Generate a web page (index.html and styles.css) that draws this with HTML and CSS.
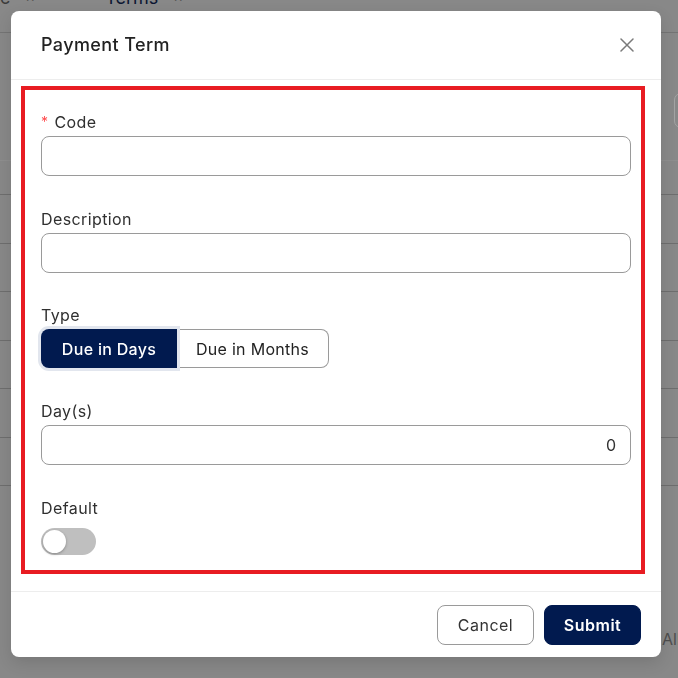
FILE: index.html
```html
<!DOCTYPE html>
<html lang="en">
<head>
<meta charset="utf-8">
<title>Payment Term</title>
<link rel="stylesheet" href="styles.css">
</head>
<body>
<div class="page">
  <div class="tabs">
    <span class="tab tab-cut">c<span class="tab-x">×</span></span>
    <span class="tab tab-terms">Terms<span class="tab-x">×</span></span>
  </div>
  <div class="toolbar"><span class="tool-btn"></span></div>
  <div class="table">
    <div class="thead"></div>
    <div class="row"></div>
    <div class="row"></div>
    <div class="row"></div>
    <div class="row"></div>
    <div class="row"></div>
    <div class="row"></div>
  </div>
  <div class="page-foot">All</div>
</div>

<div class="overlay">
  <div class="modal">
    <div class="modal-header">
      <h1 class="modal-title">Payment Term</h1>
      <button class="close-btn" aria-label="Close">
        <svg width="14" height="14" viewBox="0 0 14 14"><path d="M1 1 L13 13 M13 1 L1 13" stroke="#7a7a7a" stroke-width="1.5" fill="none" stroke-linecap="round"/></svg>
      </button>
    </div>
    <div class="modal-body">
      <div class="field">
        <label class="label"><span class="req">*</span>Code</label>
        <div class="input"></div>
      </div>
      <div class="field">
        <label class="label">Description</label>
        <div class="input"></div>
      </div>
      <div class="field field-type">
        <label class="label">Type</label>
        <div class="seg">
          <span class="seg-btn seg-active">Due in Days</span>
          <span class="seg-btn seg-idle">Due in Months</span>
        </div>
      </div>
      <div class="field">
        <label class="label">Day(s)</label>
        <div class="input input-num">0</div>
      </div>
      <div class="field field-last">
        <label class="label">Default</label>
        <span class="switch"><span class="knob"></span></span>
      </div>
    </div>
    <div class="modal-footer">
      <button class="btn btn-cancel">Cancel</button>
      <button class="btn btn-submit">Submit</button>
    </div>
  </div>
</div>
</body>
</html>
```

FILE: styles.css
```css
html, body {
  margin: 0;
  padding: 0;
}
body {
  width: 678px;
  height: 678px;
  overflow: hidden;
  background: #888888;
  font-family: Inter, "Noto Sans", sans-serif;
  color: #2f2f2f;
}

/* background page (dimmed) */
.page {
  width: 678px;
}
.tabs {
  display: flex;
  align-items: flex-start;
  height: 43px;
  margin-top: -11px;
  border-bottom: 1px solid #747474;
  font-size: 18px;
  line-height: 1;
  white-space: nowrap;
}
.tab {
  display: flex;
  color: #3c3c3c;
}
.tab-terms {
  margin-left: 70px;
  color: #0d1733;
}
.tab-x {
  font-size: 15px;
  margin-left: 15px;
  color: #4a4a4a;
}
.toolbar {
  height: 127px;
  padding-left: 674px;
  box-sizing: border-box;
  padding-top: 60px;
}
.tool-btn {
  display: block;
  width: 60px;
  height: 35px;
  border: 1px solid #a4a4a4;
  border-radius: 7px;
  box-sizing: border-box;
}
.thead {
  height: 35px;
  box-sizing: border-box;
  border-top: 1px solid #8e8e8e;
  border-bottom: 1px solid #6e6e6e;
}
.row {
  height: 48.5px;
  box-sizing: border-box;
  border-bottom: 1px solid #6e6e6e;
}
.page-foot {
  margin-top: 143px;
  padding-left: 662px;
  font-size: 16px;
  color: #4e4e4e;
  white-space: nowrap;
}

/* overlay + modal */
.overlay {
  position: fixed;
  inset: 0;
  padding: 11px 17px 21px 11px;
  box-sizing: border-box;
}
.modal {
  width: 650px;
  height: 646px;
  background: #ffffff;
  border-radius: 8px;
  box-shadow: 0 6px 16px rgba(0, 0, 0, 0.12);
  display: flex;
  flex-direction: column;
  box-sizing: border-box;
}
.modal-header {
  flex-shrink: 0;
  height: 69px;
  box-sizing: border-box;
  padding: 0 27px 1px 30px;
  display: flex;
  align-items: center;
  justify-content: space-between;
  border-bottom: 1px solid #ededed;
}
.modal-title {
  margin: 0;
  font-size: 18px;
  font-weight: 500;
  letter-spacing: 0.4px;
  color: #222222;
}
.close-btn {
  border: 0;
  background: none;
  padding: 0;
  width: 14px;
  height: 14px;
  display: flex;
}

.modal-body {
  flex-shrink: 0;
  margin: 6px 16px 0 10px;
  border: 4px solid #e81c22;
  padding: 21px 10px 15px 16px;
  display: flex;
  flex-direction: column;
  gap: 32px;
}
.field {
  display: flex;
  flex-direction: column;
}
.field-type {
  margin-top: -1px;
}
.label {
  font-size: 16px;
  line-height: 22px;
  height: 22px;
  margin-bottom: 3px;
  letter-spacing: 0.4px;
  color: #303030;
  display: flex;
  align-items: center;
}
.req {
  color: #ff4d4f;
  font-size: 14px;
  margin-right: 6px;
}
.input {
  height: 40px;
  box-sizing: border-box;
  border: 1px solid #9a9a9a;
  border-radius: 8px;
  display: flex;
  align-items: center;
  justify-content: flex-end;
  padding: 0 14px;
  font-size: 16px;
  color: #333;
}
.seg {
  display: flex;
}
.seg-btn {
  height: 39px;
  box-sizing: border-box;
  display: flex;
  align-items: center;
  justify-content: center;
  font-size: 16px;
  letter-spacing: 0.3px;
}
.seg-active {
  width: 136px;
  background: #011a4f;
  color: #ffffff;
  font-weight: 500;
  border-radius: 8px 0 0 8px;
  box-shadow: 0 0 0 3px #e2e6ee;
  position: relative;
  z-index: 1;
}
.seg-idle {
  width: 152px;
  border: 1px solid #9a9a9a;
  border-left: 0;
  border-radius: 0 8px 8px 0;
  color: #222;
}
.field-last .label {
  margin-bottom: 9px;
}
.switch {
  width: 55px;
  height: 27px;
  border-radius: 14px;
  background: #bfbfbf;
  display: flex;
  align-items: center;
  padding: 0 2px;
  box-sizing: border-box;
}
.knob {
  width: 23px;
  height: 23px;
  border-radius: 50%;
  background: #ffffff;
  box-shadow: 0 1px 3px rgba(0, 0, 0, 0.3);
}

.modal-footer {
  flex-shrink: 0;
  margin-top: 17px;
  border-top: 1px solid #ededed;
  padding: 13px 20px 12px;
  display: flex;
  justify-content: flex-end;
  gap: 10px;
}
.btn {
  width: 97px;
  height: 40px;
  border-radius: 8px;
  font-family: inherit;
  font-size: 16px;
  letter-spacing: 0.5px;
  box-sizing: border-box;
  cursor: pointer;
}
.btn-cancel {
  background: #ffffff;
  border: 1px solid #9a9a9a;
  color: #333333;
}
.btn-submit {
  background: #011a4f;
  border: 1px solid #011a4f;
  color: #ffffff;
  font-weight: 600;
}
```
